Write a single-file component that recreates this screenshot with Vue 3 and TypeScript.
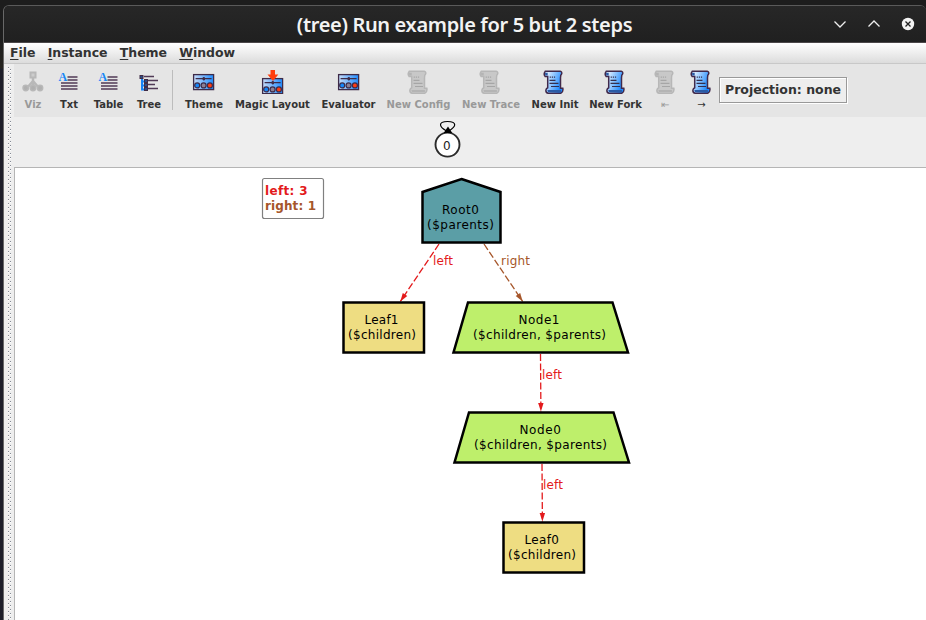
<script setup lang="ts">
type IconKind = 'viz' | 'text' | 'tree' | 'panel' | 'magic' | 'scroll'
interface Tool { label: string; icon: IconKind; width: number; disabled?: boolean; divider?: boolean; arrow?: boolean }
interface Label { text: string; x: number; y: number; len: number }
interface GraphNode { shape: string; fill: string; labels: Label[] }
interface Edge { x1: number; y1: number; x2: number; y2: number; color: string; text: string; tx: number; ty: number; len: number }

const menus: string[] = ['File', 'Instance', 'Theme', 'Window']

const tools: Tool[] = [
  { label: 'Viz', icon: 'viz', width: 24, disabled: true },
  { label: 'Txt', icon: 'text', width: 24 },
  { label: 'Table', icon: 'text', width: 31 },
  { label: 'Tree', icon: 'tree', width: 26 },
  { label: 'Theme', icon: 'panel', width: 39, divider: true },
  { label: 'Magic Layout', icon: 'magic', width: 74 },
  { label: 'Evaluator', icon: 'panel', width: 54 },
  { label: 'New Config', icon: 'scroll', width: 62, disabled: true },
  { label: 'New Trace', icon: 'scroll', width: 59, disabled: true },
  { label: 'New Init', icon: 'scroll', width: 45 },
  { label: 'New Fork', icon: 'scroll', width: 52 },
  { label: '⇤', icon: 'scroll', width: 24, disabled: true, arrow: true },
  { label: '→', icon: 'scroll', width: 24, arrow: true },
]

const red = '#e31a1c'
const brown = '#a6562a'

const nodes: GraphNode[] = [
  { shape: '461.5,179 500.5,192 500.5,242.5 422.5,242.5 422.5,192', fill: '#5b9ea6', labels: [
    { text: 'Root0', x: 442, y: 214, len: 37 }, { text: '($parents)', x: 427, y: 229, len: 67 }] },
  { shape: '343.5,302.5 424,302.5 424,352.5 343.5,352.5', fill: '#eedd82', labels: [
    { text: 'Leaf1', x: 364.5, y: 324, len: 34 }, { text: '($children)', x: 348, y: 339, len: 68 }] },
  { shape: '468,302.5 612.5,302.5 628,352.5 453.5,352.5', fill: '#beef6b', labels: [
    { text: 'Node1', x: 518.5, y: 324, len: 41 }, { text: '($children, $parents)', x: 473, y: 339, len: 133 }] },
  { shape: '469,412.5 613.5,412.5 629,462.5 454.5,462.5', fill: '#beef6b', labels: [
    { text: 'Node0', x: 519.5, y: 434, len: 41.5 }, { text: '($children, $parents)', x: 474, y: 449, len: 133 }] },
  { shape: '503.5,522.5 584,522.5 584,572.5 503.5,572.5', fill: '#eedd82', labels: [
    { text: 'Leaf0', x: 524.5, y: 544, len: 34.5 }, { text: '($children)', x: 508, y: 559, len: 68 }] },
]

const edges: Edge[] = [
  { x1: 439, y1: 244, x2: 400.3, y2: 301.5, color: red, text: 'left', tx: 433, ty: 265, len: 20 },
  { x1: 484, y1: 244, x2: 522.7, y2: 301.5, color: brown, text: 'right', tx: 501, ty: 265, len: 29 },
  { x1: 540.5, y1: 354, x2: 540.9, y2: 411.5, color: red, text: 'left', tx: 542, ty: 379, len: 20 },
  { x1: 542, y1: 464, x2: 542.4, y2: 521.5, color: red, text: 'left', tx: 543, ty: 489, len: 20 },
]

function arrowHead(e: Edge): string {
  const deg = (Math.atan2(e.y2 - e.y1, e.x2 - e.x1) * 180) / Math.PI
  return `translate(${e.x2} ${e.y2}) rotate(${deg})`
}
</script>

<template>
  <div class="desktop">
    <div class="window">
      <header class="titlebar">
        <h1 class="title">(tree) Run example for 5 but 2 steps</h1>
        <div class="controls">
          <svg width="14" height="14" viewBox="0 0 14 14"><path d="M1.5 4.5 7 10l5.500-5.500" /></svg>
          <svg width="14" height="14" viewBox="0 0 14 14"><path d="M1.500 9.500 7 4l5.500 5.500" /></svg>
          <svg width="14" height="14" viewBox="0 0 14 14">
            <circle cx="7" cy="7" r="6.200" /><path class="cross" d="M4.500 4.500l5 5M9.500 4.500l-5 5" />
          </svg>
        </div>
      </header>

      <nav class="menubar">
        <span v-for="m in menus" :key="m" class="menu"><u>{{ m[0] }}</u>{{ m.slice(1) }}</span>
      </nav>

      <div class="body">
        <div class="grip"></div>
        <main class="content">
          <div class="toolbar">
            <template v-for="t in tools" :key="t.label">
              <i v-if="t.divider" class="divider"></i>
              <div class="tool" :class="{ disabled: t.disabled }" :style="{ width: t.width + 'px' }">
                <svg class="icon" width="24" height="24" viewBox="0 0 24 24">
                  <g v-if="t.icon === 'viz'" fill="#b8b8b8" stroke="#b8b8b8">
                    <rect x="9.500" y="2.500" width="5" height="5" stroke-width="2" fill="#ccc" />
                    <path d="M12 8v3M12 11l-6 7M12 11v7M12 11l6 7" stroke-width="2.500" fill="none" />
                    <g stroke-width="1.500" fill="#b0b0b0">
                      <circle cx="4.700" cy="18" r="2.700" /><circle cx="12" cy="18" r="2.700" /><circle cx="19" cy="18" r="2.700" />
                    </g>
                  </g>
                  <g v-else-if="t.icon === 'text'">
                    <path d="M10.500 7h10M10.500 10h10M4 13h16.500M4 16h16.500M4 19h16.500" stroke="#503a56" stroke-width="1.600" />
                    <text class="letter" x="1.600" y="11">A</text>
                  </g>
                  <g v-else-if="t.icon === 'tree'">
                    <path d="M5 8v11.500h4M5 11.500h4M5 15.500h4" stroke="#1784f8" stroke-width="2" fill="none" />
                    <path d="M7 6.500h10M10 10.500h11M10 14.500h8M10 18.500h11" stroke="#503a56" stroke-width="1.300" />
                    <g fill="#2c4c84" stroke="#402c46">
                      <rect x="3" y="5.500" width="3" height="3" /><rect x="7.500" y="9.500" width="3" height="3" />
                      <rect x="7.500" y="13.500" width="3" height="3" /><rect x="7.500" y="17.500" width="3" height="3" />
                    </g>
                  </g>
                  <g v-else-if="t.icon === 'panel' || t.icon === 'magic'">
                    <g :transform="t.icon === 'magic' ? 'translate(0 4)' : ''">
                      <defs>
                        <linearGradient id="panel-fill"><stop offset="0" stop-color="#c8dcf8" /><stop offset="1" stop-color="#1e8cff" /></linearGradient>
                      </defs>
                      <rect x="1.600" y="4.600" width="20" height="15" fill="url(#panel-fill)" stroke="#3d2b49" stroke-width="1.300" />
                      <path d="M3.600 8.700h16M11.800 7v3.500" stroke="#3d2b49" stroke-width="1.300" />
                      <path d="M10.600 8.700h2.400" stroke="#3d2b49" stroke-width="2.500" />
                      <g stroke="#3d2b49" stroke-width="1.200">
                        <circle cx="5.200" cy="15.400" r="2.500" fill="#1687fa" /><circle cx="11.600" cy="15.400" r="2.500" fill="#8b7f94" /><circle cx="17.900" cy="15.400" r="2.500" fill="#ff3b12" />
                      </g>
                    </g>
                    <path v-if="t.icon === 'magic'" d="M9.500 0h4.500v4.500h3.300L12 11 6.500 4.500h3z" fill="#ff3d0c" />
                  </g>
                  <g v-else>
                    <defs>
                      <linearGradient id="scroll-on" x2="1" y2=".4"><stop offset=".1" stop-color="#f0f8ff" /><stop offset="1" stop-color="#1c88ff" /></linearGradient>
                    </defs>
                    <path d="M2.300 1.200h14.900q1.900.3 1.500 2.600-1.200 1.200-1.200 4v10.400h2.300q.7 4-2 5H5.200q-2.500-.3-2.300-3 .2-1.700 1.800-2.400V6.500H2.200Q.1 4 2.300 1.200Z"
                      :fill="t.disabled ? '#c8c8c8' : 'url(#scroll-on)'" :stroke="t.disabled ? '#b7b7b7' : '#40294b'" stroke-width="1.500" />
                    <path d="M2 2.700h2.700v2.800H2.200zM4.400 20h13.500v2H5z" :fill="t.disabled ? '#b4b4b4' : '#2a5aa5'" />
                    <path d="M6.700 7.200h1.200m.9 0h1.200m.9 0h1.200M6.500 10.400h6M6.500 13.400h9M8 16.500h8" fill="none" :stroke="t.disabled ? '#a6a6a6' : '#35304e'" stroke-width="1.200" />
                  </g>
                </svg>
                <span class="caption" :class="{ arrow: t.arrow }">{{ t.label }}</span>
              </div>
            </template>
            <button class="projection" type="button">Projection: none</button>
          </div>

          <div class="states">
            <svg width="30" height="42" viewBox="433 118 30 42">
              <path d="M446.500 131C443 129 440.500 127 440.500 124.800 440.500 122.500 443 121.500 447.500 121.500S454.700 122.500 454.700 124.800C454.700 127 452 129 449 131" fill="none" stroke="#000" stroke-width="1.200" />
              <circle cx="447.500" cy="144.600" r="12" fill="#fff" stroke="#2b2b2b" stroke-width="1.900" />
              <path d="M448 126.500l4.300 6.500h-8.600z" />
              <text class="graph-text" x="443" y="150" fill="#222">0</text>
            </svg>
          </div>

          <div class="canvas">
            <svg width="911" height="452" viewBox="15 168 911 452">
              <rect x="262.500" y="178.500" width="61" height="40" rx="2" fill="#fff" stroke="#808080" stroke-width="1.200" />
              <text class="graph-text strong" x="265" y="195" textLength="42.500" :fill="red">left: 3</text>
              <text class="graph-text strong" x="265" y="210" textLength="51" :fill="brown">right: 1</text>
              <g v-for="(e, i) in edges" :key="'e' + i">
                <line :x1="e.x1" :y1="e.y1" :x2="e.x2" :y2="e.y2" :stroke="e.color" stroke-width="1.300" stroke-dasharray="7 2.500" />
                <path d="M0 0-8.500-2.700v5.400z" :transform="arrowHead(e)" :fill="e.color" />
                <text class="graph-text" :x="e.tx" :y="e.ty" :textLength="e.len" :fill="e.color">{{ e.text }}</text>
              </g>
              <g v-for="(n, i) in nodes" :key="'n' + i">
                <polygon :points="n.shape" :fill="n.fill" stroke="#000" stroke-width="2.500" />
                <text v-for="l in n.labels" :key="l.text" class="graph-text" :x="l.x" :y="l.y" :textLength="l.len">{{ l.text }}</text>
              </g>
            </svg>
          </div>
        </main>
      </div>
    </div>
  </div>
</template>

<style>
body { overflow: hidden; }
</style>

<style scoped>
.desktop {
  box-sizing: border-box;
  width: 926px;
  height: 620px;
  padding: 5px 0 0 3px;
  background: linear-gradient(#1d1d1d 0 40px, #25231f 68px, #1d1e29 69px 100%);
  font-family: "DejaVu Sans", sans-serif;
  overflow: hidden;
}
.window {
  box-sizing: border-box;
  height: 615px;
  display: flex;
  flex-direction: column;
  border-left: 1px solid #686868;
  border-top: 1px solid #5a5a5a;
  border-radius: 6px 6px 0 0;
  overflow: hidden;
}
.titlebar {
  position: relative;
  box-sizing: border-box;
  height: 37px;
  flex: none;
  display: flex;
  align-items: center;
  justify-content: center;
  background: linear-gradient(#272727, #202020);
  border-bottom: 1px solid #4c484a;
}
.title {
  margin: 2px 1px 0 0;
  font: 600 20px/36px "Noto Sans", sans-serif;
  letter-spacing: -0.34px;
  color: #f3f3f3;
  white-space: nowrap;
}
.controls {
  position: absolute;
  right: 11px;
  top: 11px;
  display: flex;
  gap: 20px;
}
.controls path { fill: none; stroke: #eee; stroke-width: 1.3; }
.controls circle { fill: #f4f4f4; }
.controls .cross { stroke: #222; }
.menubar {
  box-sizing: border-box;
  height: 21px;
  flex: none;
  display: flex;
  gap: 12.3px;
  padding-left: 6px;
  background: linear-gradient(#fff, #dcdcdc);
  border-bottom: 1px solid #c8c8c8;
  color: #333;
  font-size: 12.5px;
  font-weight: bold;
  line-height: 20px;
  letter-spacing: -0.05px;
}
.menu u { text-underline-offset: 2px; text-decoration-thickness: 1px; }
.body { flex: 1; display: flex; background: #eee; }
.grip {
  width: 10px;
  flex: none;
  margin-top: 3px;
  background:
    linear-gradient(#858a94 1px, #fff 1px 2px, transparent 2px) 4px 0 / 1px 4px repeat-y,
    linear-gradient(#858a94 1px, #fff 1px 2px, transparent 2px) 6px 2px / 1px 4px repeat-y;
}
.content { flex: 1; display: flex; flex-direction: column; }
.toolbar {
  box-sizing: border-box;
  height: 53px;
  display: flex;
  align-items: flex-start;
  gap: 12px;
  padding: 6px 0 0 7px;
  background: #e5e5e5;
}
.tool { display: flex; flex-direction: column; align-items: center; flex: none; }
.icon { display: block; }
.letter { font: bold 12px "Liberation Serif", serif; fill: #1787f7; }
.caption { color: #333; font-size: 10px; font-weight: bold; line-height: 13px; margin-top: 4px; white-space: nowrap; }
.disabled .caption { color: #999; }
.caption.arrow { font-weight: normal; }
.divider { width: 1px; height: 40px; margin: 0 -0.5px 0 -2px; background: #bcbcbc; }
.projection {
  box-sizing: border-box;
  width: 128px;
  height: 26px;
  margin: 7px 0 0 -6.5px;
  padding: 0;
  background: #eee;
  border: 1px solid #999;
  box-shadow: inset 1px 1px #fff, 1px 1px #fff;
  color: #333;
  font: bold 12.5px/24px "DejaVu Sans", sans-serif;
  white-space: nowrap;
}
.states { height: 50px; padding-left: 419px; }
.states svg { display: block; margin-top: 1px; }
.canvas { flex: 1; border: solid #b5b5b5; border-width: 1px 0 0 1px; background: #fff; }
.canvas svg { display: block; }
.graph-text { font: 12px "DejaVu Sans", sans-serif; }
.strong { font-weight: bold; }
</style>
